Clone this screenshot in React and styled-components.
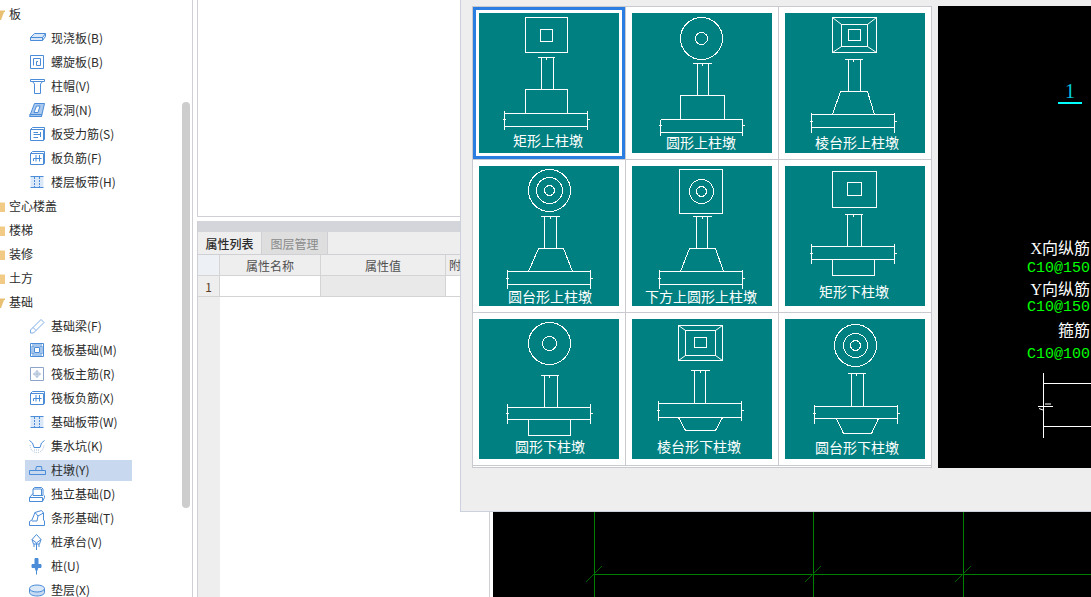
import React from "react";
import styled, { createGlobalStyle } from "styled-components";

const CJK = `"Noto Sans CJK SC", "Noto Sans", sans-serif`;

const GlobalStyle = createGlobalStyle`
  html, body {
    margin: 0;
    padding: 0;
    background: #fff;
    overflow: hidden;
  }
  * { box-sizing: border-box; }
`;

// tree icons, drawn on an 18x18 box
const ICONS = {
  slab: (
    <>
      <path d="M1.5 8.5 L5.5 4.5 H16.5 V7.5 L13.5 11.5 H1.5 Z" fill="#dbe8f8" />
      <path d="M1.5 8.5 H13.5 V11.5 M13.5 8.5 L16.5 4.5" />
    </>
  ),
  spiral: <path d="M1.5 2.5 H14.5 V15.5 H1.5 Z M4.5 12.5 V5.5 H11.5 V12.5 H7.5 V8.5 H9" />,
  cap: <path d="M1.5 2.5 H15.5 V4.5 H1.5 Z M3.5 4.5 L5.5 7 V16.5 H11.5 V7 L13.5 4.5" />,
  hole: (
    <>
      <path d="M0.5 15.5 L5.5 2.5 H15.5 L12.5 15.5 Z" fill="#a9c8ee" />
      <path d="M0.5 13.5 H12.5 V15.5" />
      <path d="M5 11.5 L7.5 5 H11 L9 11.5 Z" fill="#fff" />
    </>
  ),
  rebar: (
    <>
      <path d="M1.5 4.5 L3.5 2.5 H15.5 V14.5 L14.5 15.5 H1.5 Z M1.5 4.5 H14.5 V15.5" />
      <path d="M4.5 9.5 H11.5 M11.5 7 V12 M4.5 7.5 H9 M4.5 12.5 H9" />
    </>
  ),
  negative: (
    <>
      <path d="M1.5 4.5 L3.5 2.5 H15.5 V14.5 L14.5 15.5 H1.5 Z M1.5 4.5 H14.5 V15.5" />
      <path d="M7 6 V12.5 M10.5 6 V12.5 M4.5 9.5 H12.5 M4.5 9.5 V12" />
    </>
  ),
  band: (
    <>
      <path d="M1.5 3.5 H14.5 V14.5 H1.5 Z" fill="#dbe8f8" stroke="none" />
      <path d="M1.5 3.5 H14.5 M1.5 14.5 H14.5" />
      <path d="M5.5 4 V14 M10.5 4 V14" strokeDasharray="2 1" />
    </>
  ),
  beam: <path d="M1.500 13 L12 2.500 L15 5.500 L4.500 16 H1.500 Z M4 10.500 L7 13.500" stroke="#7eaee6" />,
  raft: (
    <>
      <path d="M1.5 2.5 H14.5 V15.500 H1.5 Z M5.500 6.500 H10.500 V11.500 H5.500 Z" />
      <path d="M3.500 4.500 H12.500 V13.500 H3.500 Z" strokeWidth="3" strokeDasharray="1 1" />
    </>
  ),
  main: (
    <>
      <path d="M1.5 2.5 H14.5 V15.5 H1.5 Z" stroke="#8aa5c8" />
      <path d="M8 5 V13 M4 9 H12" stroke="#9ab0cc" />
      <circle cx="8" cy="9" r="2.5" stroke="#b5c6dc" />
    </>
  ),
  pit: (
    <>
      <path d="M0.5 3.5 L3.500 6 L5 10.5 H11 L12.500 6 L15.500 3.5" />
      <path d="M1 8 Q2 15.500 8 15.500 Q14 15.500 15 8" stroke="#a5bcd8" strokeDasharray="1 1" />
      <path d="M5 13 H11" stroke="#a5bcd8" strokeDasharray="1 1" />
    </>
  ),
  pier: <path d="M6.5 9.500 L7.500 5.500 H12.500 L13 9.500 M0.5 9.500 H16.500 V13.500 H0.5 Z" />,
  isolated: (
    <>
      <path d="M5.500 2.500 H12.500 L14 4 V10.500 H4 V4 Z M4 4 H12.500 V10.500" />
      <path d="M4 8.5 L0.500 12.500 V16.500 H13.500 L15.500 12.500 V10.500 M0.500 12.500 H13.500 V16.500" />
    </>
  ),
  strip: (
    <path d="M0.500 16.500 V12.500 L3 11 L6 3.500 L12.500 1.500 L14.500 4 V11 L15.500 12 V16.500 Z M6 3.500 L9 7 L8 12 H3 M9 7 L14.500 4" />
  ),
  capTop: (
    <>
      <path d="M7.500 1.500 L12 6.500 L10.500 11 H4.500 L3 6.500 Z M3 6.500 L7.500 10 L12 6.500 M7.500 10 V17" />
      <path d="M5 11 V14 M10 11 V14" />
    </>
  ),
  pile: (
    <>
      <path d="M6 1.500 H9 V7.500 H12 V10.500 H9 L7.500 14.500 L6 10.500 H3 V7.500 H6 Z" fill="#4a8cd8" />
      <path d="M7.500 14 V17.500" />
    </>
  ),
  cushion: (
    <>
      <path d="M0.500 7.500 V11.500 C0.500 13.500 4 15 8 15 C12 15 15.500 13.500 15.500 11.500 V7.500" fill="#c6daf2" />
      <ellipse cx="8" cy="7.500" rx="7.500" ry="3.500" fill="#dbe8f8" />
    </>
  ),
};

const TREE = [
  { name: "板", open: true },
  { name: "现浇板(B)", icon: "slab" },
  { name: "螺旋板(B)", icon: "spiral" },
  { name: "柱帽(V)", icon: "cap" },
  { name: "板洞(N)", icon: "hole" },
  { name: "板受力筋(S)", icon: "rebar" },
  { name: "板负筋(F)", icon: "negative" },
  { name: "楼层板带(H)", icon: "band" },
  { name: "空心楼盖" },
  { name: "楼梯" },
  { name: "装修" },
  { name: "土方" },
  { name: "基础", open: true },
  { name: "基础梁(F)", icon: "beam" },
  { name: "筏板基础(M)", icon: "raft" },
  { name: "筏板主筋(R)", icon: "main" },
  { name: "筏板负筋(X)", icon: "negative" },
  { name: "基础板带(W)", icon: "band" },
  { name: "集水坑(K)", icon: "pit" },
  { name: "柱墩(Y)", icon: "pier", selected: true },
  { name: "独立基础(D)", icon: "isolated" },
  { name: "条形基础(T)", icon: "strip" },
  { name: "桩承台(V)", icon: "capTop" },
  { name: "桩(U)", icon: "pile" },
  { name: "垫层(X)", icon: "cushion" },
];

// pier thumbnails: coordinates read off the 140x140 teal squares
const PIERS = [
  {
    label: "矩形上柱墩", lx: 68.5, ly: 127,
    rects: [[46, 4, 88, 39], [61, 16, 73, 28]],
    col: [62, 74, 44, 76], dim: [58, 75],
    slab: [25, 108, 100, 113], ends: [97, 116], tick: 106,
    ped: [46, 88, 76, 100], pedTop: [46, 88],
  },
  {
    label: "圆形上柱墩", lx: 68.5, ly: 129,
    circles: [[69, 25, 21], [69, 25, 6]],
    col: [65, 76, 50, 82], dim: [60, 79],
    slab: [28, 110, 106, 119], ends: [106, 122], tick: 112,
    ped: [48, 92, 82, 106], pedTop: [48, 92],
  },
  {
    label: "棱台形上柱墩", lx: 71.5, ly: 129,
    rects: [[47, 4, 91, 39], [56, 11, 82, 33], [63, 16, 75, 27]],
    diag: true,
    col: [63, 75, 46, 78], dim: [59, 77],
    slab: [26, 109, 101, 114], ends: [99, 119], tick: 108,
    ped: [47, 89, 78, 101], pedTop: [55, 82],
  },
  {
    label: "圆台形上柱墩", lx: 70.5, ly: 130,
    circles: [[70, 24, 21], [70, 24, 13], [70, 24, 5]],
    col: [65, 77, 50, 82], dim: [61, 80],
    slab: [28, 111, 105, 118], ends: [103, 122], tick: 112,
    ped: [49, 93, 82, 105], pedTop: [59, 84],
  },
  {
    label: "下方上圆形上柱墩", lx: 68.5, ly: 130,
    rects: [[47, 3, 90, 47]],
    circles: [[69, 25, 12], [69, 25, 5]],
    col: [64, 75, 50, 82], dim: [60, 79],
    slab: [27, 110, 105, 118], ends: [103, 122], tick: 112,
    ped: [48, 91, 82, 105], pedTop: [57, 83],
  },
  {
    label: "矩形下柱墩", lx: 68.5, ly: 125,
    rects: [[47, 5, 91, 41], [62, 16, 76, 29]],
    col: [62, 76, 48, 80], dim: [59, 77],
    slab: [26, 109, 80, 93], ends: [77, 97], tick: 87,
    ped: [47, 89, 109, 93], pedTop: [47, 89],
  },
  {
    label: "圆形下柱墩", lx: 70.5, ly: 127,
    circles: [[70, 24, 21], [70, 24, 7]],
    col: [65, 78, 56, 88], dim: [61, 79],
    slab: [28, 111, 88, 100], ends: [84, 104], tick: 94,
    ped: [49, 91, 116, 100], pedTop: [49, 91],
  },
  {
    label: "棱台形下柱墩", lx: 66.5, ly: 127,
    rects: [[46, 6, 90, 41], [53, 11, 83, 36], [62, 18, 74, 28]],
    diag: true,
    col: [62, 73, 51, 84], dim: [58, 77],
    slab: [26, 109, 84, 98], ends: [81, 101], tick: 91,
    ped: [46, 90, 111, 98], pedTop: [53, 83],
  },
  {
    label: "圆台形下柱墩", lx: 71.5, ly: 128,
    circles: [[70, 26, 21], [70, 26, 12], [70, 26, 5]],
    col: [66, 78, 54, 87], dim: [62, 80],
    slab: [29, 112, 87, 99], ends: [85, 104], tick: 94,
    ped: [51, 93, 114, 99], pedTop: [58, 86],
  },
];

const NOTES = [
  { kind: "title", text: "X向纵筋", mt: 0 },
  { kind: "value", text: "C10@150", mt: 0 },
  { kind: "title", text: "Y向纵筋", mt: 1 },
  { kind: "value", text: "C10@150", mt: -2 },
  { kind: "title", text: "箍筋", mt: 3 },
  { kind: "value", text: "C10@100", mt: 4 },
];

const PierThumb = ({ pier }) => {
  const { rects = [], circles = [], col, dim, slab, ends, tick, ped, pedTop } = pier;
  const [sx1, sx2, sy1, sy2] = slab;
  const [px1, px2, py1, py2] = ped;
  const outer = rects[0];
  const mid = rects[1];
  return (
    <Thumb viewBox="0 0 140 140">
      <g fill="none" stroke="#fff" strokeWidth="1" transform="translate(0.5 0.5)">
        {rects.map(([x1, y1, x2, y2]) => (
          <rect key={x1} x={x1} y={y1} width={x2 - x1} height={y2 - y1} shapeRendering="crispEdges" />
        ))}
        {pier.diag && (
          <path
            d={`M${outer[0]} ${outer[1]} L${mid[0]} ${mid[1]} M${outer[2]} ${outer[1]} L${mid[2]} ${mid[1]} M${outer[0]} ${outer[3]} L${mid[0]} ${mid[3]} M${outer[2]} ${outer[3]} L${mid[2]} ${mid[3]}`}
          />
        )}
        {circles.map(([cx, cy, r]) => (
          <circle key={r} cx={cx} cy={cy} r={r} shapeRendering="crispEdges" />
        ))}
        <g shapeRendering="crispEdges">
          <path d={`M${dim[0]} ${col[2]} H${dim[1]} M${col[0]} ${col[2]} V${col[3]} M${col[1]} ${col[2]} V${col[3]}`} />
          <path d={`M${(dim[0] + dim[1]) / 2} ${col[2] - 1} V${col[2] + 2}`} />
          <path d={`M${sx1} ${sy1} H${sx2} M${sx1} ${sy2} H${sx2} M${sx1} ${ends[0]} V${ends[1]} M${sx2} ${ends[0]} V${ends[1]}`} />
          <path d={`M${sx1 - 2} ${tick} H${sx1 + 1} M${sx2 - 1} ${tick} H${sx2 + 2}`} />
          <path d={`M${px1} ${py2} L${pedTop[0]} ${py1} H${pedTop[1]} L${px2} ${py2}`} />
        </g>
        <text x={pier.lx} y={pier.ly + 5} textAnchor="middle" fill="#fff" stroke="none" fontSize="14" fontFamily={CJK}>
          {pier.label}
        </text>
      </g>
    </Thumb>
  );
};

const App = () => (
  <>
    <GlobalStyle />
    <Page>
      <Sidebar>
        {TREE.map((item) =>
          item.icon ? (
            <TreeRow key={item.name + item.icon}>
              <ChildLabel $selected={item.selected}>
                <TreeIcon viewBox="0 0 18 18">{ICONS[item.icon]}</TreeIcon>
                <TreeText>{item.name}</TreeText>
              </ChildLabel>
            </TreeRow>
          ) : (
            <TreeRow key={item.name}>
              <Folder viewBox="0 0 14 12">
                <path d="M0 1 H5 L6.500 2.500 H14 V12 H0 Z" fill={item.open ? "#e9bf72" : "#f1cb85"} />
                {item.open && <path d="M10 12 L13 4 H14 V12 Z" fill="#fff" />}
              </Folder>
              <TreeText>{item.name}</TreeText>
            </TreeRow>
          )
        )}
        <ScrollThumb />
      </Sidebar>

      <Middle>
        <TopPane />
        <PropsPane>
          <PaneBar />
          <Tabs>
            <Tab $active>属性列表</Tab>
            <Tab>图层管理</Tab>
          </Tabs>
          <TableRow>
            <IndexCell $corner />
            <NameCell $head>属性名称</NameCell>
            <ValueCell $head>属性值</ValueCell>
            <RestCell $head>附加</RestCell>
          </TableRow>
          <TableRow>
            <IndexCell>1</IndexCell>
            <NameCell />
            <ValueCell $shaded />
            <RestCell />
          </TableRow>
          <Gutter />
        </PropsPane>
      </Middle>

      <Canvas>
        <GridLines>
          <g stroke="#008000" shapeRendering="crispEdges">
            <path d="M101.500 0 V597 M320.500 0 V597 M470.500 0 V597 M101 574.500 H598" />
          </g>
          <path d="M93 582 L109 566 M312 582 L328 566 M462 582 L478 566" stroke="#006400" />
        </GridLines>
      </Canvas>

      <Dialog>
        <PierGrid>
          {PIERS.map((pier, i) => (
            <PierCell key={pier.label} $selected={i === 0} $last={i % 3 === 2}>
              <PierThumb pier={pier} />
            </PierCell>
          ))}
        </PierGrid>
        <Preview>
          <SectionMark>1</SectionMark>
          <SectionRule />
          <NoteBlock>
            {NOTES.map((note, i) =>
              note.kind === "title" ? (
                <NoteTitle key={i} $mt={note.mt}>{note.text}</NoteTitle>
              ) : (
                <NoteValue key={i} $mt={note.mt}>{note.text}</NoteValue>
              )
            )}
          </NoteBlock>
          <SectionDraw>
            <path d="M0.500 0 V65 M0.500 10.500 H48 M0.500 53.500 H48" stroke="#fff" />
            <path d="M-5 33.500 H10 M-4 35.500 L0 37 M2 31 L8 31" stroke="#fff" />
          </SectionDraw>
        </Preview>
      </Dialog>
    </Page>
  </>
);

const Page = styled.div`
  position: relative;
  display: flex;
  width: 1091px;
  height: 597px;
  overflow: hidden;
  background: #fff;
  font-family: ${CJK};
  font-size: 12px;
  color: #2b2b2b;
`;

const Sidebar = styled.aside`
  position: relative;
  flex: 0 0 193px;
  padding-top: 2px;
  overflow: hidden;
  border-right: 1px solid #cfcfd4;
`;

const TreeRow = styled.div`
  display: flex;
  align-items: center;
  height: 24px;
  white-space: nowrap;
`;

const TreeText = styled.span`
  margin-bottom: 2px;
`;

const Folder = styled.svg`
  flex: none;
  width: 14px;
  height: 12px;
  margin: 0 4px 0 -9px;
`;

const ChildLabel = styled.div`
  display: flex;
  align-items: center;
  gap: 4px;
  width: 107px;
  height: 21px;
  margin-left: 25px;
  padding-left: 4px;
  background: ${(props) => (props.$selected ? "#c7d8ef" : "transparent")};
`;

const TreeIcon = styled.svg`
  flex: none;
  width: 18px;
  height: 18px;
  fill: none;
  stroke: #4a8cd8;
  stroke-width: 1;
`;

const ScrollThumb = styled.div`
  position: absolute;
  top: 102px;
  left: 182px;
  width: 8px;
  height: 406px;
  border-radius: 4px;
  background: #cdcdcd;
`;

const Middle = styled.div`
  display: flex;
  flex-direction: column;
  flex: 0 0 293px;
  gap: 4px;
  margin-left: 4px;
  border-right: 1px solid #cfcfd4;
`;

const TopPane = styled.div`
  flex: 0 0 217px;
  border-left: 1px solid #cfcfd4;
  border-bottom: 1px solid #cfcfd4;
`;

const PropsPane = styled.div`
  display: flex;
  flex-direction: column;
  flex: 1;
  border-left: 1px solid #cfcfd4;
`;

const PaneBar = styled.div`
  flex: 0 0 11px;
  background: #d3d5da;
`;

const Tabs = styled.div`
  display: flex;
  flex: 0 0 23px;
  background: #eeeeee;
  border-bottom: 1px solid #cfcfd4;
`;

const Tab = styled.div`
  display: flex;
  align-items: center;
  justify-content: center;
  width: ${(props) => (props.$active ? "64px" : "66px")};
  background: ${(props) => (props.$active ? "#eeeeee" : "#dedede")};
  border-right: 1px solid #cfcfd4;
  color: ${(props) => (props.$active ? "#2b2b2b" : "#8a8a8a")};
  font-weight: ${(props) => (props.$active ? 500 : 400)};
`;

const TableRow = styled.div`
  display: flex;
  flex: 0 0 21px;
  border-bottom: 1px solid #d4d4d4;
  color: #505050;
`;

const IndexCell = styled.div`
  display: flex;
  align-items: center;
  justify-content: center;
  flex: 0 0 22px;
  background: ${(props) => (props.$corner ? "#edf1f6" : "#eeeeee")};
  border-right: 1px solid #d4d4d4;
  color: #5a3d22;
`;

const NameCell = styled.div`
  display: flex;
  align-items: center;
  justify-content: center;
  flex: 0 0 101px;
  background: ${(props) => (props.$head ? "#eeeeee" : "#fff")};
  border-right: 1px solid #d4d4d4;
`;

const ValueCell = styled(NameCell)`
  flex: 0 0 125px;
  background: ${(props) => (props.$head ? "#eeeeee" : props.$shaded ? "#e9e9e9" : "#fff")};
`;

const RestCell = styled.div`
  flex: 1;
  padding-left: 3px;
  line-height: 20px;
  background: ${(props) => (props.$head ? "#eeeeee" : "#fff")};
`;

const Gutter = styled.div`
  flex: 1;
  width: 22px;
  background: #eeeeee;
`;

const Canvas = styled.div`
  position: relative;
  flex: 1;
  margin-left: 3px;
  background: #000;
`;

const GridLines = styled.svg`
  position: absolute;
  top: 0;
  left: 0;
  width: 598px;
  height: 597px;
`;

const Dialog = styled.div`
  position: absolute;
  top: 0;
  left: 460px;
  right: 0;
  display: flex;
  align-items: flex-start;
  gap: 6px;
  height: 512px;
  padding: 6px 0 0 11px;
  background: #eeeeee;
  border-left: 1px solid #cbd2de;
  border-bottom: 1px solid #cbd2de;
`;

const PierGrid = styled.div`
  display: grid;
  flex: none;
  grid-template-columns: 153px 153px 152px;
  grid-auto-rows: 153px;
  width: 460px;
  height: 462px;
  background: #fff;
  border: 1px solid #c9c9d0;
`;

const PierCell = styled.div`
  padding: 6px;
  border-right: ${(props) => (props.$last ? "none" : "1px solid #c9c9d0")};
  border-bottom: 1px solid #c9c9d0;
  box-shadow: ${(props) => (props.$selected ? "inset 0 0 0 3px #2a7de1" : "none")};
`;

const Thumb = styled.svg`
  display: block;
  width: 140px;
  height: 140px;
  background: #008080;
`;

const Preview = styled.div`
  position: relative;
  flex: 1;
  height: 462px;
  overflow: hidden;
  background: #000;
`;

const SectionMark = styled.div`
  position: absolute;
  top: 74px;
  left: 120px;
  width: 24px;
  text-align: center;
  font: 20px "Liberation Serif", serif;
  color: #00c8e0;
`;

const SectionRule = styled.div`
  position: absolute;
  top: 96px;
  left: 120px;
  width: 24px;
  height: 2px;
  background: #00ffff;
`;

const NoteBlock = styled.div`
  position: absolute;
  top: 233px;
  right: 1px;
  display: flex;
  flex-direction: column;
  align-items: flex-end;
  width: 100px;
`;

const NoteTitle = styled.div`
  height: 20px;
  margin-top: ${(props) => props.$mt}px;
  font: 16px/20px "Liberation Serif", ${CJK};
  color: #fff;
`;

const NoteValue = styled.div`
  height: 20px;
  margin-top: ${(props) => props.$mt}px;
  font: 15px/20px "Liberation Mono", monospace;
  color: #00ff00;
`;

const SectionDraw = styled.svg`
  position: absolute;
  top: 367px;
  left: 105px;
  width: 48px;
  height: 66px;
  overflow: visible;
`;

export default App;
